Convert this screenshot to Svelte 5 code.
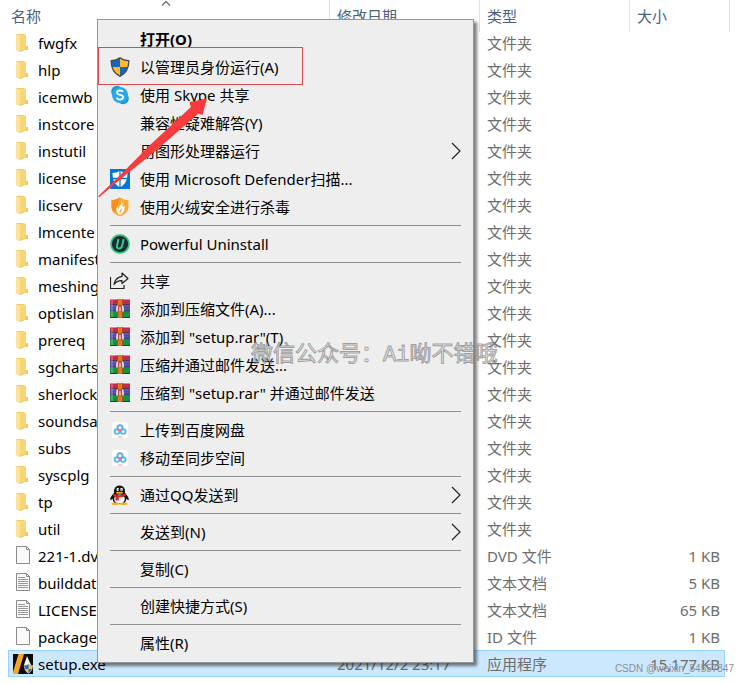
<script>
  const folders = ['fwgfx', 'hlp', 'icemwb', 'instcore', 'instutil', 'license', 'licserv', 'lmcente', 'manifest', 'meshing', 'optislan', 'prereq', 'sgcharts', 'sherlock', 'soundsa', 'subs', 'syscplg', 'tp', 'util'];
  const rows = [
    ...folders.map((name) => ({ name, icon: 'folder', type: '文件夹' })),
    { name: '221-1.dv', icon: 'blank', type: 'DVD 文件', size: '1 KB' },
    { name: 'builddat', icon: 'text', type: '文本文档', size: '5 KB' },
    { name: 'LICENSE', icon: 'text', type: '文本文档', size: '65 KB' },
    { name: 'package', icon: 'blank', type: 'ID 文件', size: '1 KB' },
    { name: 'setup.exe', icon: 'app', type: '应用程序', size: '15,177 KB', date: '2021/12/2 23:17', selected: true }
  ];
  const groups = [
    [
      { label: '打开(O)', bold: true },
      { label: '以管理员身份运行(A)', icon: 'shield', marked: true },
      { label: '使用 Skype 共享', icon: 'skype' },
      { label: '兼容性疑难解答(Y)' },
      { label: '用图形处理器运行', sub: true },
      { label: '使用 Microsoft Defender扫描...', icon: 'defender' },
      { label: '使用火绒安全进行杀毒', icon: 'huorong' }
    ],
    [{ label: 'Powerful Uninstall', icon: 'uninstall' }],
    [
      { label: '共享', icon: 'share' },
      { label: '添加到压缩文件(A)...', icon: 'rar' },
      { label: '添加到 "setup.rar"(T)', icon: 'rar' },
      { label: '压缩并通过邮件发送...', icon: 'rar' },
      { label: '压缩到 "setup.rar" 并通过邮件发送', icon: 'rar' }
    ],
    [
      { label: '上传到百度网盘', icon: 'baidu' },
      { label: '移动至同步空间', icon: 'baidu' }
    ],
    [{ label: '通过QQ发送到', icon: 'qq', sub: true }],
    [{ label: '发送到(N)', sub: true }],
    [{ label: '复制(C)' }],
    [{ label: '创建快捷方式(S)' }],
    [{ label: '属性(R)' }]
  ];
</script>

{#snippet icon(kind)}
  <svg class="icon" viewBox="0 0 20 20" aria-hidden="true">
    {#if kind === 'folder'}
      <path d="M3 1h8v16.500l-4 1.500L3 17z" fill="#efc763" />
      <path d="M3 1l4 1.500V18.500L3 17z" fill="#fbe39c" />
      <path d="M7 1.500h6V13h2v4H7.500L7 18z" fill="#f8d676" />
      <path d="M13 13h2v4h-3z" fill="#efc763" />
    {:else if kind === 'blank' || kind === 'text'}
      <path d="M3.500.5h10l3 3v14h-13z" fill="#fafafa" stroke="#8a8a8a" />
      <path d="M13.500.5v3h3" fill="none" stroke="#8a8a8a" />
      {#if kind === 'text'}
        <path d="M5 4.500h7M5 6.500h10M5 8.500h10M5 10.500h10M5 12.500h10M5 14.500h10" stroke="#999" />
      {/if}
    {:else if kind === 'app'}
      <path d="M0 0h20v20H0z" fill="#0b0b0b" />
      <path d="M5.500 0H11L5 20H0v-2z" fill="#f7a528" />
      <path d="M14 2l4 9h-7z" fill="#f4f4f4" />
      <path d="M11 11.500q2.500 0 4.500-1.500q2 1.500 4 1.500q0 6-4 8q-4-2-4.500-8z" fill="#276cb4" stroke="#ddd" stroke-width=".6" />
      <path d="M15.500 10.500v4.500h3.500q.5-1.500.5-3.300q-2.500 0-4-1.200zM15.500 15h-3.500q1 3 3.500 4.300z" fill="#f2c14d" />
    {:else if kind === 'shield'}
      <path d="M10 .8Q6.500 3.600 1.200 3.600C1 11 4 16.500 10 19.300C16 16.500 19 11 18.800 3.600Q13.500 3.600 10 .8z" fill="#fdb92e" />
      <path d="M10 1Q6.500 3.600 1.200 3.600q0 3.500 1 6.400H10zM10 10h7.800q-2 6.500-7.800 9.300z" fill="#1567b9" />
      <path d="M10 .8Q6.500 3.600 1.200 3.600C1 11 4 16.500 10 19.300C16 16.500 19 11 18.800 3.600Q13.500 3.600 10 .8z" fill="none" stroke="#454c52" stroke-width="1.300" />
    {:else if kind === 'skype'}
      <circle cx="7" cy="6.500" r="5.800" fill="#1597dc" />
      <circle cx="13" cy="13.500" r="5.800" fill="#1597dc" />
      <circle cx="10" cy="10" r="8" fill="#28a8ea" />
      <path d="M13 6.800Q12.500 5.500 10 5.500Q7 5.500 7 7.600Q7 9.300 10 9.900Q13.200 10.500 13.200 12.300Q13.200 14.500 10 14.500Q7.200 14.500 6.800 12.600" fill="none" stroke="#fff" stroke-width="1.800" />
    {:else if kind === 'defender'}
      <path d="M0 0h20v20H0z" fill="#0875d1" />
      <path d="M10 1.800Q7 4 2.500 4C2.500 11 4.500 15.500 10 18.300C15.500 15.500 17.500 11 17.500 4Q13 4 10 1.800z" fill="#fff" />
      <path d="M10 1v18M2 9.500h16" stroke="#0875d1" stroke-width="1.300" />
    {:else if kind === 'huorong'}
      <path d="M10 .5Q6 3 1.500 3.200V11Q2 16 10 19.500Q18 16 18.500 11V3.200Q14 3 10 .5z" fill="#ffa82b" />
      <path d="M10 .5Q6 3 1.500 3.200V11Q2 14 5 16.500z" fill="#fb8e18" />
      <path d="M11 3Q12.500 6 10 8.500Q8.500 10 8.500 12Q7.500 11 7.500 9.500Q4.500 13 8.500 17L10 18Q16 15 14.500 8Q13.800 10 12.500 10.500Q13.500 5.500 11 3z" fill="#fff" />
      <path d="M11.500 11Q12.500 14 10 16.500Q8.500 14.500 11.500 11z" fill="#ffb347" />
    {:else if kind === 'uninstall'}
      <circle cx="10" cy="10" r="9" fill="#1d2935" stroke="#35c878" stroke-width="1.800" />
      <path d="M8.500 5L7 11.500Q6.500 14.500 9 14.500Q11.500 14.500 12.200 11.500L13.700 5" fill="none" stroke="#38cb84" stroke-width="2" />
    {:else if kind === 'share'}
      <path d="M.5 6v11.500h13.500V14" fill="none" stroke="#222" stroke-width="1.200" />
      <path d="M12 2L18 7.500L12 12.500V9.700Q7 9.500 4 13.500Q5 6.500 12 5.300z" fill="none" stroke="#222" stroke-width="1.200" stroke-linejoin="round" />
    {:else if kind === 'rar'}
      <path d="M0 .5h20v6H0z" fill="#c4294a" />
      <path d="M0 6.500h20v6H0z" fill="#4e50b5" />
      <path d="M0 12.500h20v6.500H0z" fill="#169341" />
      <path d="M0 5.800h20M0 12h20M0 18.500h20" stroke="#382c45" />
      <path d="M2 1v17" stroke="#fff" stroke-opacity=".45" />
      <path d="M7.500 0h5v19h-5z" fill="#e2741f" />
      <path d="M7.500 0v19M12.500 0v19" stroke="#8f4a20" stroke-width=".7" />
      <path d="M6.500 6h7v7h-7z" fill="#b5523d" />
      <path d="M7 12.500V9q0-2 1-2M13 12.500V9q0-2-1-2" fill="none" stroke="#f4f4f4" stroke-width="1.500" />
      <path d="M10 8v4.500" stroke="#f2e6d8" stroke-width="1.200" />
    {:else if kind === 'baidu'}
      <rect x="2" y="2" width="16" height="16" rx="3" fill="#fff" />
      <g fill="none" stroke-width="1.800">
        <circle cx="10" cy="7.800" r="2.600" stroke="#5aa9ed" />
        <circle cx="7" cy="11.500" r="2.400" stroke="#4fb8f3" />
        <circle cx="13.200" cy="11.500" r="2.400" stroke="#4fb8f3" />
        <path d="M7.800 9.200Q10 12 12.200 9" stroke="#ed7189" />
      </g>
      <path d="M8 17h4.500" stroke="#f19baa" />
    {:else if kind === 'qq'}
      <path d="M4 8Q3.500.5 9.500.5Q15.500.5 15 8Q19 12 18.800 15Q17.800 15.500 16.500 13.500Q16 19 9.500 19Q3 19 2.500 13.500Q1 15.500.2 15Q0 12 4 8z" fill="#111" />
      <ellipse cx="9.500" cy="14" rx="5.300" ry="4.500" fill="#fff" />
      <ellipse cx="5.500" cy="18.700" rx="4" ry="1.200" fill="#f5a91f" />
      <ellipse cx="13.500" cy="18.700" rx="4" ry="1.200" fill="#f5a91f" />
      <path d="M3.500 8.500Q9.500 12 15.500 8.500L16 11Q12 12.500 8.800 12.300V15.500H5.500V12L3 11z" fill="#e52222" />
      <ellipse cx="7.800" cy="4.500" rx="1.300" ry="1.800" fill="#fff" />
      <ellipse cx="11.500" cy="4.500" rx="1.300" ry="1.800" fill="#fff" />
      <path d="M8.200 4v1.500M11.200 4v1.500" stroke="#111" stroke-width=".8" />
      <ellipse cx="9.500" cy="7.700" rx="3.600" ry="1" fill="#f5a91f" />
    {/if}
  </svg>
{/snippet}

<main>
  <table>
    <colgroup>
      <col /><col class="date" /><col class="type" /><col class="size" /><col class="end" />
    </colgroup>
    <thead>
      <tr>
        <th class="name">名称
          <svg class="sort" viewBox="0 0 10 6" aria-hidden="true"><path d="M1 5.500L5 1.500L9 5.500" /></svg>
        </th>
        <th>修改日期</th>
        <th>类型</th>
        <th class="open">大小</th>
        <td></td>
      </tr>
    </thead>
    <tbody>
      {#each rows as row}
        <tr class:selected={row.selected}>
          <td class="name"><span class="file">{@render icon(row.icon)}{row.name}</span></td>
          <td>{row.date ?? ''}</td>
          <td>{row.type}</td>
          <td class="amount">{row.size ?? ''}</td>
          <td></td>
        </tr>
      {/each}
    </tbody>
  </table>

  <div class="menu" role="menu">
    {#each groups as group, i}
      {#if i > 0}<hr />{/if}
      {#each group as item}
        <button type="button" role="menuitem" class:bold={item.bold} class:marked={item.marked}>
          {@render icon(item.icon)}
          <span>{item.label}</span>
          {#if item.sub}
            <svg class="more" viewBox="0 0 10 18" aria-hidden="true"><path d="M1 1l8 8l-8 8" /></svg>
          {/if}
        </button>
      {/each}
    {/each}
  </div>

  <svg class="pointer" viewBox="0 0 112 102" aria-hidden="true">
    <path d="M0 100.500L93 11.500L91.500 6L109 2.500L104.500 19L99.500 17.500L50 59L1.500 101z" fill="#f93b3b" />
    <path d="M1 100.500L52 49L93 11L100 18L55 57z" fill="#f93b3b" />
  </svg>
  <div class="watermark">微信公众号：<span>Ai</span>呦不错哦</div>
  <div class="credit">CSDN @weixin_54557847</div>
</main>

<style>
  :global(body) {
    margin: 0;
    background: #fff;
  }
  main {
    position: relative;
    padding: 0 18px 6px 8px;
    font: 15px/20px "Noto Sans", "Noto Sans CJK SC", sans-serif;
    color: #000;
    overflow: hidden;
  }
  table {
    width: 100%;
    table-layout: fixed;
    border-collapse: separate;
    border-spacing: 0;
  }
  .date, .type { width: 150px; }
  .size { width: 95px; }
  .end { width: 5px; }
  th, td {
    box-sizing: border-box;
    padding: 0 0 0 7px;
    text-align: left;
    font-weight: 400;
    white-space: nowrap;
  }
  thead tr { height: 29px; }
  th {
    position: relative;
    padding-top: 3px;
    color: #4c607a;
  }
  th::after {
    content: "";
    position: absolute;
    top: 0;
    right: 0;
    width: 1px;
    height: 32px;
    background: #e2e2e2;
  }
  th.open::after { right: -5px; }
  th.name { padding-left: 3px; }
  .sort {
    position: absolute;
    top: 0;
    left: calc(50% - 8px);
    width: 10px;
    height: 6px;
  }
  .sort path, .more path {
    fill: none;
    stroke: #222;
    stroke-width: 1.2;
  }
  .sort path { stroke: #666; }
  tbody tr { height: 27px; }
  tbody td { color: #6d6d6d; }
  tbody td:last-child { padding: 0; }
  tbody td.name {
    padding-left: 5px;
    color: #000;
  }
  .file {
    display: flex;
    align-items: center;
    gap: 5px;
  }
  .icon {
    flex: none;
    width: 20px;
    height: 20px;
  }
  td.amount {
    padding: 0 5px 0 0;
    text-align: right;
  }
  .selected td:not(:last-child) {
    background: #cce8ff;
    border-top: 1px solid #99d1ff;
    border-bottom: 1px solid #99d1ff;
  }
  .selected td.name { border-left: 1px solid #99d1ff; padding-left: 4px; }
  .selected td.amount { border-right: 1px solid #99d1ff; padding-right: 4px; }
  .menu {
    position: absolute;
    top: 19px;
    left: 97px;
    width: 375px;
    padding: 5px 0;
    border: 1px solid #979797;
    background: #eee;
    box-shadow: 3px 3px 3px rgba(0, 0, 0, 0.5);
  }
  button {
    display: flex;
    align-items: center;
    gap: 10px;
    width: 100%;
    height: 28px;
    padding: 0 12px;
    border: 0;
    background: none;
    font: inherit;
    color: #000;
    text-align: left;
    white-space: nowrap;
  }
  button.bold { font-weight: 700; }
  button.marked { position: relative; }
  button.marked::after {
    content: "";
    position: absolute;
    inset: -6px auto -4px 0;
    width: 203px;
    border: 1px solid #dc4b4b;
  }
  .more {
    width: 10px;
    height: 18px;
    margin-left: auto;
  }
  hr {
    height: 1px;
    margin: 4px 12px;
    border: 0;
    background: #919191;
  }
  .pointer {
    position: absolute;
    top: 96px;
    left: 98px;
    width: 112px;
    height: 102px;
  }
  .watermark {
    position: absolute;
    top: 338px;
    left: 251px;
    font: 22px/26px "Noto Sans CJK SC", sans-serif;
    white-space: nowrap;
    color: transparent;
    -webkit-text-stroke: 1px rgba(125, 125, 125, 0.7);
  }
  .watermark span { font-family: "Liberation Mono", monospace; }
  .credit {
    position: absolute;
    right: 14px;
    bottom: 7px;
    font: 10px/14px "Liberation Sans", sans-serif;
    color: #8b8f94;
  }
</style>
